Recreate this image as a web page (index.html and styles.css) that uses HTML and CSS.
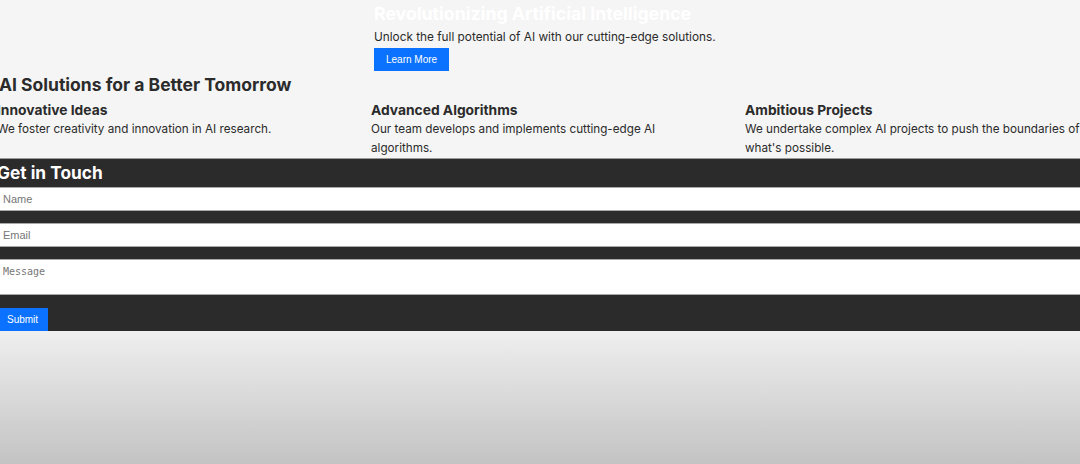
FILE: index.html
```html
<!DOCTYPE html>
<html lang="en">
<head>
    <meta charset="UTF-8">
    <meta name="viewport" content="width=device-width, initial-scale=1.0">
    <title>AI Solutions</title>
    <link rel="stylesheet" href="styles.css">
</head>
<body>
    <div class="page">
        <section class="hero">
            <h1>Revolutionizing Artificial Intelligence</h1>
            <p>Unlock the full potential of AI with our cutting-edge solutions.</p>
            <button type="button" class="btn">Learn More</button>
        </section>

        <section class="features">
            <h2>AI Solutions for a Better Tomorrow</h2>
            <div class="feature-list">
                <div class="feature">
                    <h3>Innovative Ideas</h3>
                    <p>We foster creativity and innovation in AI research.</p>
                </div>
                <div class="feature">
                    <h3>Advanced Algorithms</h3>
                    <p>Our team develops and implements cutting-edge AI algorithms.</p>
                </div>
                <div class="feature">
                    <h3>Ambitious Projects</h3>
                    <p>We undertake complex AI projects to push the boundaries of what's possible.</p>
                </div>
            </div>
        </section>

        <section class="contact">
            <h2>Get in Touch</h2>
            <form class="contact-form">
                <input type="text" name="name" placeholder="Name">
                <input type="email" name="email" placeholder="Email">
                <textarea name="message" placeholder="Message"></textarea>
                <div>
                    <button type="submit" class="btn">Submit</button>
                </div>
            </form>
        </section>
    </div>
</body>
</html>
```

FILE: styles.css
```css
html {
    height: 100%;
    overflow: hidden;
}

body {
    margin: 0;
    min-height: 100%;
    font-family: 'Inter', sans-serif;
    color: #2b2b2b;
    background: linear-gradient(to bottom, #f5f5f5 0, #f5f5f5 331px, #efefef 331px, #c3c3c3 464px);
}

.page {
    width: 1122px;
    margin-left: -3px;
}

/* hero */
.hero {
    padding: 2px 0 0 377px;
}

.hero h1 {
    margin: 0;
    font-size: 17.7px;
    line-height: 24px;
    font-weight: 700;
    color: #fff;
}

.hero p {
    margin: 2px 0 1px;
    font-size: 11.8px;
    line-height: 18px;
}

.btn {
    display: inline-block;
    padding: 5px 12px;
    border: none;
    background-color: #0a72ff;
    color: #fff;
    font-family: 'Liberation Sans', Arial, sans-serif;
    font-size: 10px;
    line-height: 13px;
    cursor: pointer;
}

/* features */
.features h2 {
    margin: 2px 0 0 2px;
    font-size: 17.5px;
    line-height: 24px;
    font-weight: 700;
}

.feature-list {
    display: grid;
    grid-template-columns: repeat(3, 1fr);
}

.feature h3 {
    margin: 3px 0 0;
    font-size: 13.8px;
    line-height: 20px;
    font-weight: 700;
}

.feature p {
    margin: 0;
    font-size: 11.7px;
    line-height: 19px;
    padding-right: 30px;
}

/* contact */
.contact {
    border-top: 1px solid #9a9a9a;
    background-color: #2b2b2b;
}

.contact h2 {
    margin: 0;
    font-size: 17.3px;
    line-height: 28px;
    font-weight: 700;
    color: #fff;
}

.contact-form {
    display: flex;
    flex-direction: column;
    gap: 12px;
}

.contact-form input,
.contact-form textarea {
    display: block;
    width: 100%;
    box-sizing: border-box;
    border: 1px solid #a8a8a8;
    padding: 4px 5px;
    background: #fff;
    margin: 0;
}

.contact-form input {
    height: 24px;
    font-family: 'Liberation Sans', Arial, sans-serif;
    font-size: 11px;
}

.contact-form textarea {
    height: 36px;
    padding-top: 6px;
    resize: none;
    font-family: 'DejaVu Sans Mono', monospace;
    font-size: 10px;
}

.contact-form input::placeholder,
.contact-form textarea::placeholder {
    color: #777;
}

.contact-form .btn {
    padding: 5px 10px;
}
```
